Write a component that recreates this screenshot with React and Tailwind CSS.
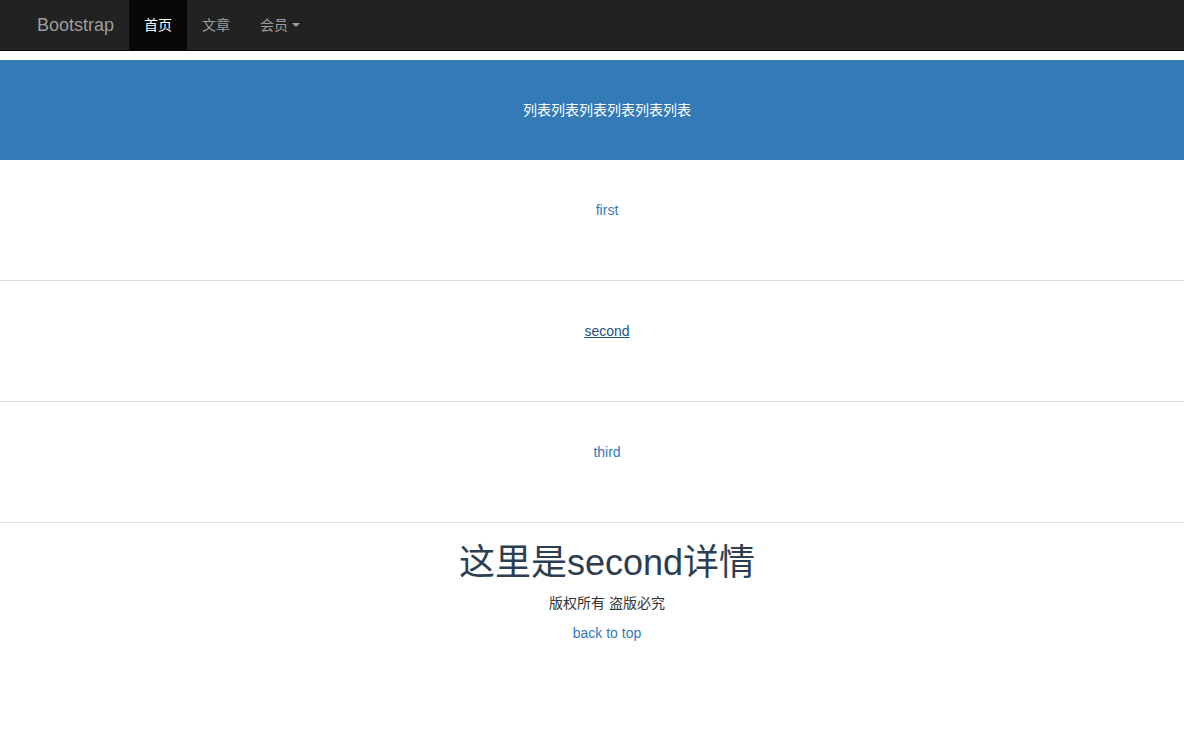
import React from 'react';

const latin = "font-['Liberation_Sans','Noto_Sans_CJK_SC',sans-serif]";

const items = [
    { label: 'first', active: false },
    { label: 'second', active: true },
    { label: 'third', active: false },
];

const App = () => {
    return (
        <div className={`${latin} min-h-screen bg-white text-[14px] leading-5 text-[#333]`}>
            {/* navbar */}
            <nav className="flex h-[51px] items-stretch border-b border-[#080808] bg-[#222]">
                <a className="ml-[22px] px-[15px] pt-[15px] text-[18px] leading-5 text-[#9d9d9d]">Bootstrap</a>
                <ul className="flex">
                    <li className="bg-[#080808] px-[15px] pt-[15px] text-white">首页</li>
                    <li className="px-[15px] pt-[15px] text-[#9d9d9d]">文章</li>
                    <li className="flex items-start px-[15px] pt-[15px] text-[#9d9d9d]">
                        会员
                        <span className="ml-[4px] mt-[8px] h-0 w-0 border-x-4 border-t-4 border-x-transparent border-t-[#9d9d9d]" />
                    </li>
                </ul>
            </nav>

            {/* banner */}
            <div className="mt-[9px] h-[100px] bg-[#337ab7] pl-[30px] pt-10 text-center text-white">列表列表列表列表列表列表</div>

            {/* list */}
            <div>
                {items.map((item) => (
                    <div key={item.label} className="h-[121px] border-b border-[#ddd] pl-[30px] pt-10 text-center">
                        <a className={item.active ? 'text-[#23527c] underline' : 'text-[#337ab7]'}>{item.label}</a>
                    </div>
                ))}
            </div>

            {/* detail */}
            <div className="pl-[30px] text-center">
                <h1 className="mb-[10px] mt-5 text-[36px] leading-[1.1] font-normal text-[#2c3e50]">这里是second详情</h1>
                <p className="mb-[10px] text-[#333]">版权所有 盗版必究</p>
                <a className="text-[#337ab7]">back to top</a>
            </div>
        </div>
    );
};

export default App;
